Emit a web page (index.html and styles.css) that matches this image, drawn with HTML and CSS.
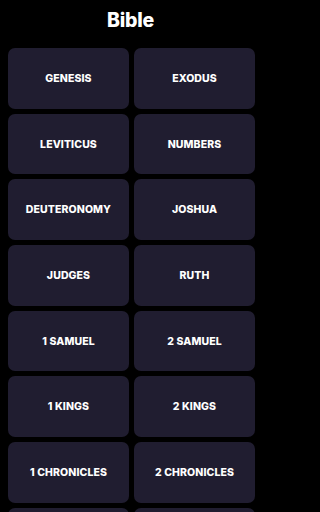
FILE: index.html
```html
<!DOCTYPE html>
<html>
<head>
<meta charset="utf-8">
<link rel="stylesheet" href="styles.css">
</head>
<body>
<div class="app">
<header class="header"><h1 class="title">Bible</h1></header>
<main class="grid">
  <div class="card">GENESIS</div>
  <div class="card">EXODUS</div>
  <div class="card">LEVITICUS</div>
  <div class="card">NUMBERS</div>
  <div class="card">DEUTERONOMY</div>
  <div class="card">JOSHUA</div>
  <div class="card">JUDGES</div>
  <div class="card">RUTH</div>
  <div class="card">1 SAMUEL</div>
  <div class="card">2 SAMUEL</div>
  <div class="card">1 KINGS</div>
  <div class="card">2 KINGS</div>
  <div class="card">1 CHRONICLES</div>
  <div class="card">2 CHRONICLES</div>
  <div class="card"></div>
  <div class="card"></div>
</main>
</div>
</body>
</html>
```
FILE: styles.css
```css
html, body {
  margin: 0;
  padding: 0;
  background: #000;
  overflow: hidden;
  height: 512px;
}
body {
  font-family: Inter, "Liberation Sans", sans-serif;
  color: #fff;
}
.app {
  width: 261px;
}
.header {
  height: 48px;
  display: flex;
  justify-content: center;
  align-items: flex-start;
}
.title {
  margin: 8px 0 0;
  font-size: 19.5px;
  font-weight: 800;
  line-height: 24px;
  letter-spacing: -0.2px;
}
.grid {
  display: grid;
  grid-template-columns: 1fr 1fr;
  grid-auto-rows: 60.7px;
  column-gap: 5px;
  row-gap: 5px;
  padding: 0 6px 0 8px;
}
.card {
  background: #201d30;
  border-radius: 7px;
  display: flex;
  align-items: center;
  justify-content: center;
  font-size: 10.5px;
  font-weight: 800;
  letter-spacing: 0.1px;
}
```
